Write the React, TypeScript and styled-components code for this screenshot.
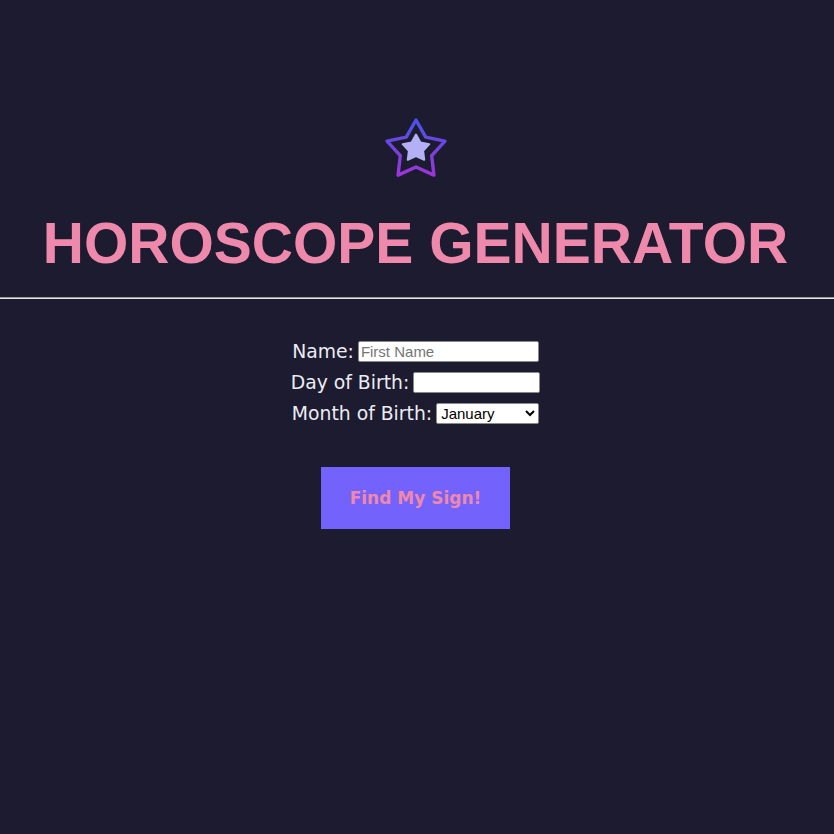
import React from "react";
import styled, { createGlobalStyle } from "styled-components";

const Global = createGlobalStyle`
  html, body { margin: 0; padding: 0; background: #1c1b30; }
  body { font-family: "Liberation Sans", Arial, sans-serif; }
`;

const Page = styled.div`
  min-height: 834px;
  box-sizing: border-box;
  padding-right: 3px;
  background: #1c1b30;
  display: flex;
  flex-direction: column;
  align-items: center;
`;

const Header = styled.header`
  width: 100%;
  display: flex;
  flex-direction: column;
  align-items: center;
  padding-top: 114px;
`;

const Title = styled.h1`
  margin: 26px 0 0;
  font-family: "Liberation Sans", Arial, sans-serif;
  font-weight: 700;
  font-size: 57px;
  line-height: 66px;
  color: #ee89ab;
`;

const Rule = styled.hr`
  width: calc(100% + 3px);
  margin: 21px -3px 0 0;
  border: none;
  border-top: 1px solid #9a9a9a;
  border-bottom: 1px solid #e6e6e6;
  height: 0;
`;

const Form = styled.form`
  display: flex;
  flex-direction: column;
  align-items: center;
  margin-top: 40px;
  gap: 7px;
`;

const Row = styled.div`
  display: flex;
  align-items: center;
  gap: 4px;
  height: 24px;
`;

const Label = styled.label`
  font-family: "DejaVu Sans", "Open Sans", sans-serif;
  font-size: 18.8px;
  color: #ececf2;
`;

const TextInput = styled.input<{ $w: number }>`
  width: ${(p) => p.$w}px;
  height: 21px;
  box-sizing: border-box;
  border: 1px solid #8a8a8a;
  border-radius: 2px;
  padding: 1px 2px;
  font-family: "Liberation Sans", Arial, sans-serif;
  font-size: 15px;
  background: #fff;
  &::placeholder { color: #757575; }
`;

const Select = styled.select`
  width: 103px;
  height: 21px;
  box-sizing: border-box;
  border: 1px solid #8a8a8a;
  border-radius: 2px;
  font-family: "Liberation Sans", Arial, sans-serif;
  font-size: 15px;
  background: #fff;
  color: #000;
`;

const Button = styled.button`
  margin-top: 35px;
  width: 189px;
  height: 62px;
  border: none;
  background: #7362fb;
  color: #ef88ab;
  font-family: "DejaVu Sans", "Open Sans", sans-serif;
  font-weight: 700;
  font-size: 17px;
  cursor: pointer;
`;

const StarIcon = styled.svg`
  display: block;
  width: 70px;
  height: 70px;
`;

const Star = () => (
  <StarIcon viewBox="0 0 70 70">
    <defs>
      <linearGradient id="sg" x1="0" y1="0" x2="0" y2="1">
        <stop offset="0" stopColor="#4a52e6" />
        <stop offset="1" stopColor="#9b36d6" />
      </linearGradient>
    </defs>
    <polygon
      points="35,6 44.7,23.15 64,27.08 50.69,41.6 52.93,61.17 35,53 17.07,61.17 19.31,41.6 6,27.08 25.3,23.15"
      fill="none"
      stroke="url(#sg)"
      strokeWidth="3.4"
      strokeLinejoin="round"
    />
    <polygon
      points="35,20.5 39.41,28.43 48.32,30.17 42.13,36.82 43.23,45.83 35,42 26.77,45.83 27.87,36.82 21.68,30.17 30.59,28.43"
      fill="#b4b0f6"
      stroke="#b4b0f6"
      strokeWidth="2"
      strokeLinejoin="round"
    />
  </StarIcon>
);

const months = [
  "January", "February", "March", "April", "May", "June",
  "July", "August", "September", "October", "November", "December",
];

export default function App() {
  return (
    <Page>
      <Global />
      <Header>
        <Star />
        <Title>HOROSCOPE GENERATOR</Title>
      </Header>
      <Rule />
      <Form onSubmit={(e) => e.preventDefault()}>
        <Row>
          <Label htmlFor="name">Name:</Label>
          <TextInput id="name" $w={181} placeholder="First Name" />
        </Row>
        <Row>
          <Label htmlFor="day">Day of Birth:</Label>
          <TextInput id="day" $w={127} />
        </Row>
        <Row>
          <Label htmlFor="month">Month of Birth:</Label>
          <Select id="month" defaultValue="January">
            {months.map((m) => (
              <option key={m}>{m}</option>
            ))}
          </Select>
        </Row>
        <Button type="submit">Find My Sign!</Button>
      </Form>
    </Page>
  );
}
